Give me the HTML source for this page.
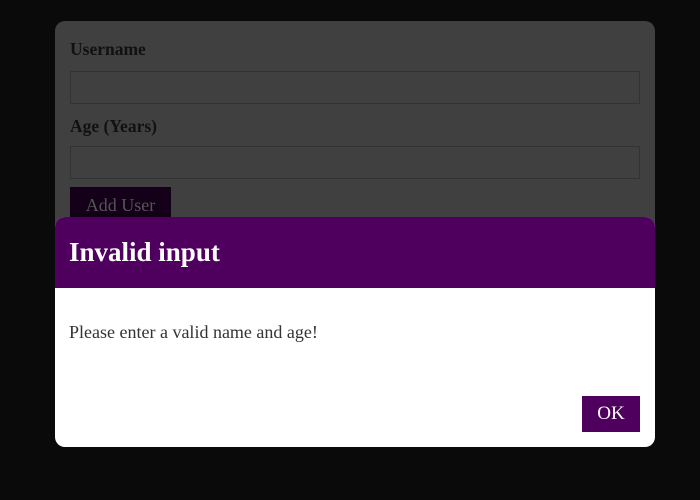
<!DOCTYPE html>
<html><head><style>
body{margin:0;width:700px;height:500px;background:#0a0a0a;font-family:"Liberation Serif",serif;position:relative;overflow:hidden}
.card{position:absolute;left:55px;top:21px;width:600px;height:230px;background:#404040;border-radius:10px}
.lbl{position:absolute;left:15px;font-weight:bold;font-size:17.5px;color:#111}
.inp{position:absolute;left:15px;width:568px;height:31px;border:1px solid #333;background:#404040}
.btn{position:absolute;left:15px;top:166px;width:101px;height:34px;background:#140018;color:#555;font-size:18px;line-height:36px;text-align:center}
.modal{position:absolute;left:55px;top:217px;width:600px;height:230px;background:#fff;border-radius:10px;overflow:hidden}
.hd{height:71px;background:#4f005f;color:#fff;font-weight:bold;font-size:27px;padding-left:14px;line-height:70px}
.msg{position:absolute;left:14px;top:105px;font-size:18px;color:#333}
.ok{position:absolute;left:527px;top:179px;width:58px;height:36px;background:#4f005f;color:#fff;font-size:19px;line-height:36px;text-align:center}
</style></head><body>
<div class="card">
<div class="lbl" style="top:18px">Username</div>
<div class="inp" style="top:50px"></div>
<div class="lbl" style="top:95px">Age (Years)</div>
<div class="inp" style="top:125px"></div>
<div class="btn">Add User</div>
</div>
<div class="modal">
<div class="hd">Invalid input</div>
<div class="msg">Please enter a valid name and age!</div>
<div class="ok">OK</div>
</div>
</body></html>
